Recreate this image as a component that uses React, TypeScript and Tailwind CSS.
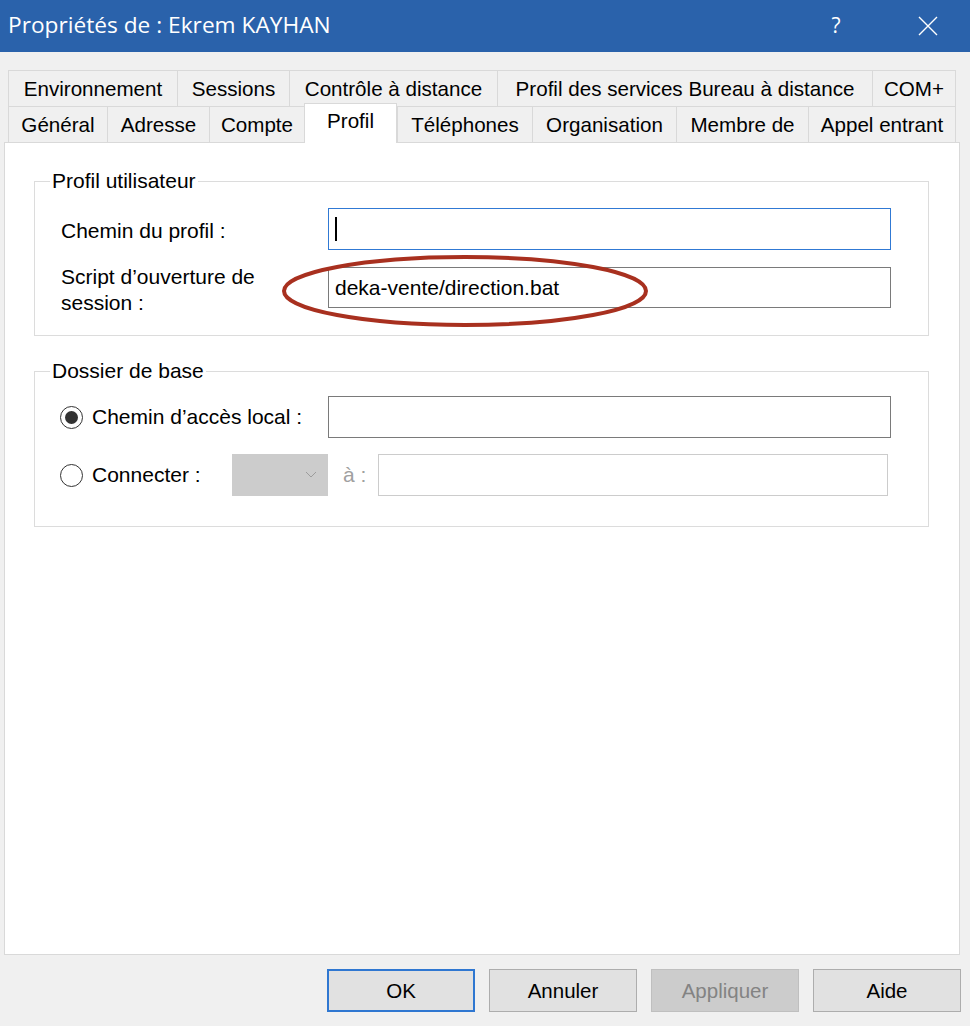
import React from "react";

const row1 = [
  { label: "Environnement", w: "w-[169px]" },
  { label: "Sessions", w: "w-[112px]" },
  { label: "Contrôle à distance", w: "w-[208px]" },
  { label: "Profil des services Bureau à distance", w: "w-[375px]" },
  { label: "COM+", w: "w-[84px]", last: true },
];

const row2 = [
  { label: "Général", w: "w-[99px]" },
  { label: "Adresse", w: "w-[102px]" },
  { label: "Compte", w: "w-[95px]" },
  { label: "Profil", w: "w-[93px]", active: true },
  { label: "Téléphones", w: "w-[135px]" },
  { label: "Organisation", w: "w-[144px]" },
  { label: "Membre de", w: "w-[132px]" },
  { label: "Appel entrant", w: "w-[148px]", last: true },
];

function Tab({ label, w, last, active }: { label: string; w: string; last?: boolean; active?: boolean }) {
  if (active) {
    return (
      <div
        className={`${w} relative z-10 -mb-px h-[40px] shrink-0 border-l border-r border-t border-[#d9d9d9] bg-white flex justify-center pt-[5px]`}
      >
        {label}
      </div>
    );
  }
  return (
    <div
      className={`${w} h-[36px] shrink-0 border-l border-t border-[#d9d9d9] flex items-center justify-center whitespace-nowrap ${
        last ? "border-r" : ""
      }`}
    >
      {label}
    </div>
  );
}

function Radio({ checked }: { checked?: boolean }) {
  return (
    <div className="w-[23px] h-[23px] shrink-0 rounded-full border-[1.5px] border-[#333333] bg-white flex items-center justify-center">
      {checked && <div className="w-[13px] h-[13px] rounded-full bg-[#333333]" />}
    </div>
  );
}

function Button({ label, primary, disabled }: { label: string; primary?: boolean; disabled?: boolean }) {
  let cls = "bg-[#e1e1e1] border border-[#adadad] text-black";
  if (primary) cls = "bg-[#e1e1e1] border-2 border-[#2f77d1] text-black";
  if (disabled) cls = "bg-[#cccccc] border border-[#bfbfbf] text-[#838383]";
  return <div className={`w-[148px] h-[43px] flex items-center justify-center ${cls}`}>{label}</div>;
}

export default function App() {
  return (
    <div className="relative w-[970px] h-[1026px] overflow-hidden bg-[#f0f0f0] text-black text-[21px] leading-[24px] font-['Liberation_Sans',Arial,sans-serif]">
      {/* Barre de titre */}
      <div className="h-[52px] bg-[#2a62ab] flex items-center pl-[8px] text-white font-['Open_Sans',sans-serif] text-[22.7px]">
        <div className="flex-1 pb-[2px]">Propriétés de : Ekrem KAYHAN</div>
        <div className="w-[20px] text-center pb-[2px] text-[21px]">?</div>
        <svg className="ml-[72px] mr-[32px]" width="20" height="20" viewBox="0 0 20 20">
          <path d="M1 1 L19 19 M19 1 L1 19" stroke="white" strokeWidth="1.4" fill="none" />
        </svg>
      </div>

      {/* Onglets */}
      <div className="pt-[18px] pl-[8px] text-[20.6px]">
        <div className="flex h-[36px]">
          {row1.map((t) => (
            <Tab key={t.label} {...t} />
          ))}
        </div>
        <div className="flex h-[36px] items-end">
          {row2.map((t) => (
            <Tab key={t.label} {...t} />
          ))}
        </div>
      </div>

      {/* Panneau */}
      <div className="ml-[4px] w-[956px] h-[813px] border border-[#d9d9d9] bg-white pt-[26px]">
        <fieldset className="ml-[29px] w-[895px] border border-[#dcdcdc] pl-[26px] pt-[15px] pb-[19px]">
          <legend className="-ml-[11px] px-[2px] leading-[24px]">Profil utilisateur</legend>
          <div className="flex items-center h-[42px]">
            <div className="w-[267px] shrink-0 pt-[3px]">Chemin du profil :</div>
            <div className="w-[563px] h-[42px] border border-[#3079d4] bg-white flex items-center pl-[6px]">
              <div className="w-[2px] h-[24px] bg-black" />
            </div>
          </div>
          <div className="flex items-start mt-[17px]">
            <div className="w-[267px] shrink-0 leading-[26px] -mt-[3px]">
              Script d’ouverture de
              <br />
              session :
            </div>
            <div className="w-[563px] h-[41px] border border-[#7a7a7a] bg-white flex items-center pl-[6px]">
              deka-vente/direction.bat
            </div>
          </div>
        </fieldset>

        <fieldset className="mt-[23px] ml-[29px] w-[895px] border border-[#dcdcdc] pl-[25px] pt-[13px] pb-[30px]">
          <legend className="-ml-[10px] px-[2px] leading-[24px]">Dossier de base</legend>
          <div className="flex items-center h-[42px]">
            <div className="w-[268px] shrink-0 flex items-center">
              <Radio checked />
              <span className="ml-[9px]">Chemin d’accès local :</span>
            </div>
            <div className="w-[563px] h-[42px] border border-[#7a7a7a] bg-white" />
          </div>
          <div className="flex items-center h-[42px] mt-[16px]">
            <div className="w-[172px] shrink-0 flex items-center">
              <Radio />
              <span className="ml-[9px]">Connecter :</span>
            </div>
            <div className="w-[96px] h-[42px] bg-[#cccccc] flex items-center justify-end pr-[11px]">
              <svg width="12" height="8" viewBox="0 0 12 8">
                <path d="M1 1 L6 6 L11 1" stroke="#9c9c9c" strokeWidth="1" fill="none" />
              </svg>
            </div>
            <div className="w-[50px] shrink-0 pl-[15px] text-[#a0a0a0]">à :</div>
            <div className="w-[510px] h-[42px] border border-[#cccccc] bg-white" />
          </div>
        </fieldset>
      </div>

      {/* Boutons */}
      <div className="mt-[14px] flex justify-end gap-[14px] pr-[9px] text-[20.5px]">
        <Button label="OK" primary />
        <Button label="Annuler" />
        <Button label="Appliquer" disabled />
        <Button label="Aide" />
      </div>

      {/* Annotation */}
      <svg className="absolute left-[279px] top-[253px] z-20" width="372" height="76" viewBox="0 0 372 76">
        <ellipse cx="186" cy="38" rx="181" ry="34" fill="none" stroke="#a8301f" strokeWidth="4" />
      </svg>
    </div>
  );
}
